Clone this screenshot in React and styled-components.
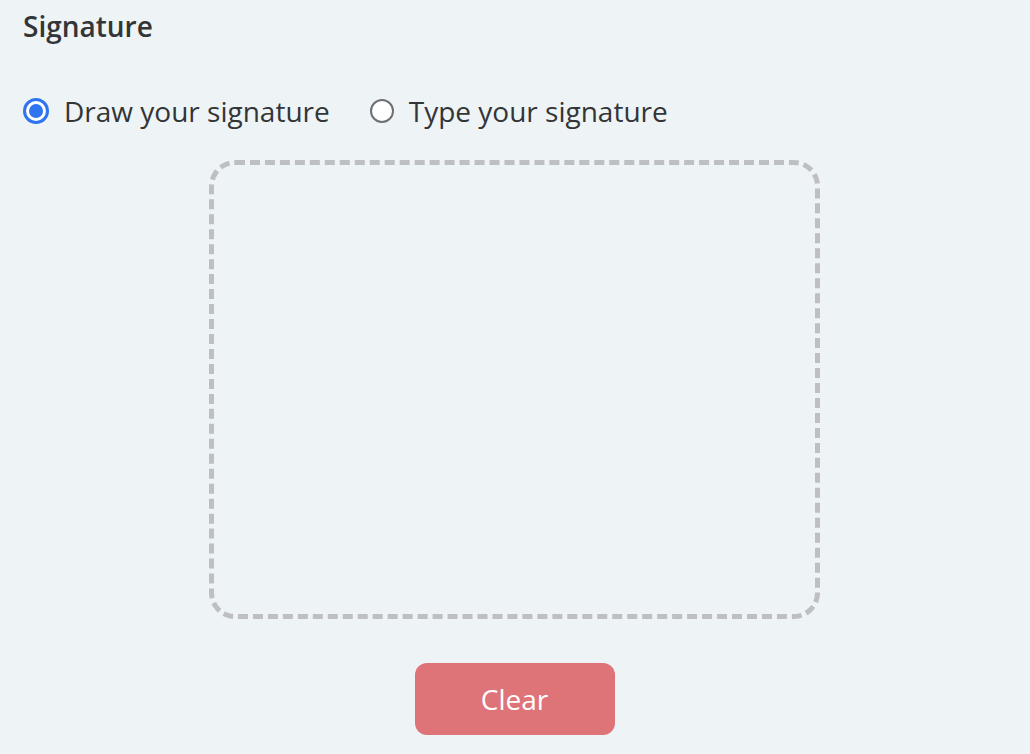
import React, { useState } from 'react';
import styled, { createGlobalStyle } from 'styled-components';

const GlobalStyle = createGlobalStyle`
  html, body {
    margin: 0;
    padding: 0;
    background: #eef3f6;
  }
  body {
    font-family: "Open Sans", "Noto Sans", sans-serif;
    color: #333537;
  }
`;

const Page = styled.div`
  padding: 7px 24px 0 23px;
  min-height: 754px;
  box-sizing: border-box;
`;

const Title = styled.h2`
  margin: 0;
  font-size: 28px;
  line-height: 38px;
  font-weight: 600;
  color: #333537;
`;

const RadioGroup = styled.div`
  display: flex;
  align-items: center;
  gap: 40px;
  margin-top: 47px;
`;

const RadioLabel = styled.label`
  display: flex;
  align-items: center;
  gap: 15px;
  font-size: 28px;
  line-height: 38px;
  color: #333537;
  cursor: pointer;
`;

const RadioCircle = styled.span`
  width: ${({ checked }) => (checked ? '26px' : '24px')};
  height: ${({ checked }) => (checked ? '26px' : '24px')};
  box-sizing: border-box;
  border-radius: 50%;
  border: ${({ checked }) => (checked ? '3px solid #2f74f0' : '2px solid #6d6f72')};
  background: #fff;
  display: flex;
  align-items: center;
  justify-content: center;
  &::after {
    content: '';
    display: ${({ checked }) => (checked ? 'block' : 'none')};
    width: 14px;
    height: 14px;
    border-radius: 50%;
    background: #2f74f0;
  }
`;

const HiddenInput = styled.input`
  display: none;
`;

const Center = styled.div`
  display: flex;
  flex-direction: column;
  align-items: center;
  margin-top: 30px;
`;

const PadBox = styled.div`
  width: 611px;
  height: 459px;
  box-sizing: border-box;
  border: 5px dashed #bdbfc2;
  border-radius: 26px;
`;

const ClearButton = styled.button`
  margin-top: 44px;
  width: 200px;
  height: 72px;
  border: none;
  border-radius: 12px;
  background: #de7378;
  color: #fff;
  font-family: "Open Sans", "Noto Sans", sans-serif;
  font-size: 28px;
  cursor: pointer;
`;

const options = [
  { id: 'draw', label: 'Draw your signature' },
  { id: 'type', label: 'Type your signature' },
];

export default function App() {
  const [mode, setMode] = useState('draw');
  return (
    <>
      <GlobalStyle />
      <Page>
        <Title>Signature</Title>
        <RadioGroup>
          {options.map((o) => (
            <RadioLabel key={o.id}>
              <HiddenInput
                type="radio"
                name="sigmode"
                checked={mode === o.id}
                onChange={() => setMode(o.id)}
              />
              <RadioCircle checked={mode === o.id} />
              {o.label}
            </RadioLabel>
          ))}
        </RadioGroup>
        <Center>
          <PadBox />
          <ClearButton>Clear</ClearButton>
        </Center>
      </Page>
    </>
  );
}
